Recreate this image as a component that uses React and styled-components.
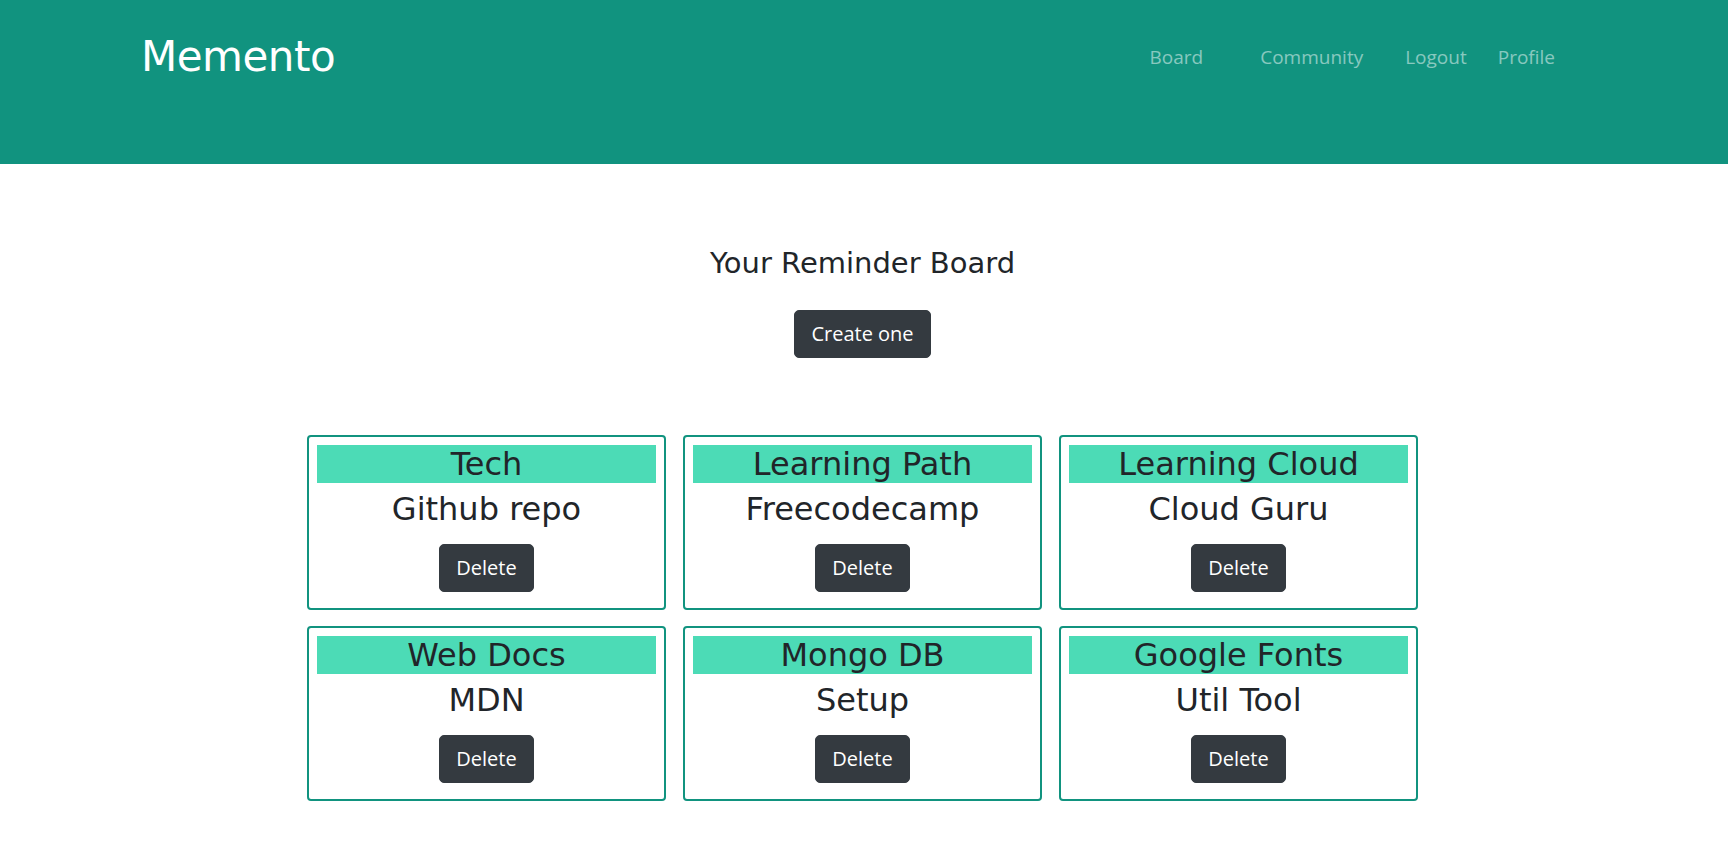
import React from "react";
import styled, { createGlobalStyle } from "styled-components";

const GlobalStyle = createGlobalStyle`
  body {
    margin: 0;
    background: #fff;
    color: #212529;
    font-family: "Open Sans", "Liberation Sans", sans-serif;
  }
`;

const Header = styled.header`
  height: 164px;
  background: #11937f;
  display: flex;
  justify-content: space-between;
  align-items: flex-start;
  padding: 0 173px 0 141px;
  box-sizing: border-box;
`;

const Brand = styled.div`
  font-family: "DejaVu Sans", sans-serif;
  font-size: 42px;
  line-height: 1;
  color: #fff;
  margin-top: 36px;
  letter-spacing: -0.5px;
`;

const Nav = styled.nav`
  display: flex;
  margin-top: 42px;
`;

const NavLink = styled.a`
  font-size: 19px;
  line-height: 30px;
  color: rgba(255, 255, 255, 0.5);
  text-decoration: none;
  margin-left: ${(p) => p.$gap || 0}px;
`;

const Main = styled.main`
  display: flex;
  flex-direction: column;
  align-items: center;
  padding: 82px 3px 0 0;
`;

const Title = styled.h2`
  font-family: "DejaVu Sans", sans-serif;
  font-weight: 400;
  font-size: 29px;
  line-height: 34px;
  margin: 0 0 30px;
`;

const DarkButton = styled.button`
  font-family: "Open Sans", sans-serif;
  font-size: 20px;
  line-height: 30px;
  padding: 8px 16px;
  border: 1px solid #343a40;
  border-radius: 5px;
  background: #343a40;
  color: #fff;
  cursor: pointer;
`;

const Grid = styled.div`
  display: grid;
  grid-template-columns: repeat(3, 359px);
  column-gap: 17px;
  row-gap: 16px;
  margin-top: 77px;
  margin-bottom: 60px;
`;

const Card = styled.div`
  border: 2px solid #11937f;
  border-radius: 4px;
  padding: 8px 8px 16px;
  display: flex;
  flex-direction: column;
  align-items: center;
`;

const CardHead = styled.div`
  align-self: stretch;
  background: #4cdbb6;
  height: 38px;
  font-family: "DejaVu Sans", sans-serif;
  font-size: 32px;
  line-height: 38px;
  text-align: center;
`;

const CardBody = styled.div`
  font-family: "DejaVu Sans", sans-serif;
  font-size: 32px;
  line-height: 38px;
  margin: 7px 0 16px;
`;

const reminders = [
  { tag: "Tech", name: "Github repo" },
  { tag: "Learning Path", name: "Freecodecamp" },
  { tag: "Learning Cloud", name: "Cloud Guru" },
  { tag: "Web Docs", name: "MDN" },
  { tag: "Mongo DB", name: "Setup" },
  { tag: "Google Fonts", name: "Util Tool" },
];

const App = () => {
  return (
    <>
      <GlobalStyle />
      <Header>
        <Brand>Memento</Brand>
        <Nav>
          <NavLink href="#">Board</NavLink>
          <NavLink href="#" $gap={57}>Community</NavLink>
          <NavLink href="#" $gap={42}>Logout</NavLink>
          <NavLink href="#" $gap={31}>Profile</NavLink>
        </Nav>
      </Header>
      <Main>
        <Title>Your Reminder Board</Title>
        <DarkButton>Create one</DarkButton>
        <Grid>
          {reminders.map((r) => (
            <Card key={r.tag}>
              <CardHead>{r.tag}</CardHead>
              <CardBody>{r.name}</CardBody>
              <DarkButton>Delete</DarkButton>
            </Card>
          ))}
        </Grid>
      </Main>
    </>
  );
};

export default App;
